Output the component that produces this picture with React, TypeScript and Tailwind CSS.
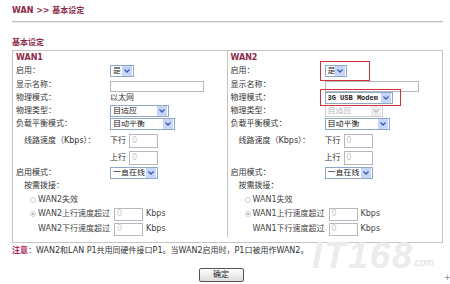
import React from "react";

const font = "font-['DejaVu_Sans','Noto_Sans_CJK_SC',sans-serif]";

const Arrow = ({ disabled }: { disabled?: boolean }) => (
  <span
    className={`flex h-[10px] w-[10px] items-center justify-center mr-[1px] ${
      disabled ? "bg-[#eeeeee]" : "bg-[#c6d6fb]"
    }`}
  >
    <svg width="6" height="4" viewBox="0 0 6 4">
      <path
        d="M0.5 0.5 L3 3 L5.5 0.5"
        fill="none"
        stroke={disabled ? "#bbbbbb" : "#3d5ba8"}
        strokeWidth="1.3"
      />
    </svg>
  </span>
);

const Select = ({
  text,
  w,
  disabled,
  mono,
}: {
  text: string;
  w: string;
  disabled?: boolean;
  mono?: boolean;
}) => (
  <div
    className={`flex h-[12px] items-center border bg-white ${w} ${
      disabled ? "border-[#d0d0d0] text-[#b5b5b5]" : "border-[#8fa6c6] text-[#222]"
    }`}
  >
    <span
      className={`flex-1 overflow-hidden pl-[2px] leading-none whitespace-nowrap ${
        mono ? "font-['Liberation_Mono',monospace] text-[7px] font-bold" : ""
      }`}
    >
      {text}
    </span>
    <Arrow disabled={disabled} />
  </div>
);

const Input = ({ w, h = "h-[11px]", value }: { w: string; h?: string; value?: string }) => (
  <div className={`flex items-center border border-[#b4b9c0] bg-white pl-[2px] text-[#c8c8c8] ${w} ${h}`}>
    {value}
  </div>
);

const Radio = ({ checked }: { checked?: boolean }) => (
  <span className="flex h-[6px] w-[6px] items-center justify-center rounded-full border border-[#d0d0d0] bg-white">
    {checked && <span className="h-[2px] w-[2px] rounded-full bg-[#999]" />}
  </span>
);

const Row = ({
  h,
  label,
  indent = "pl-[3px]",
  children,
  className = "",
}: {
  h: string;
  label?: string;
  indent?: string;
  children?: React.ReactNode;
  className?: string;
}) => (
  <div className={`flex items-center ${h} ${className}`}>
    <div className={`w-[97px] ${indent} whitespace-nowrap`}>{label}</div>
    <div className="flex items-center">{children}</div>
  </div>
);

const Wan = ({
  name,
  other,
  mode,
  right,
}: {
  name: string;
  other: string;
  mode: React.ReactNode;
  right?: boolean;
}) => (
  <div className="flex flex-col pt-[1px]">
    <div className="flex h-[12px] items-center pl-[3px] font-bold text-[#8e2a4b]">{name}</div>
    <Row h="h-[14px]" label="启用：">
      {right ? (
        <div className="relative">
          <Select text="是" w="w-[22px]" />
          <div className="absolute -left-[5px] -top-[4px] h-[20px] w-[50px] border-[1.5px] border-[#d0303a]" />
        </div>
      ) : (
        <Select text="是" w="w-[24px]" />
      )}
    </Row>
    <Row h="h-[14px]" label="显示名称：">
      <div className="pt-[2px]">
        <Input w="w-[94px]" h="h-[11px]" />
      </div>
    </Row>
    <Row h="h-[12px]" label="物理模式：">
      {mode}
    </Row>
    <Row h="h-[13px]" label="物理类型：">
      <Select text="自适应" w={right ? "w-[58px]" : "w-[59px]"} disabled={right} />
    </Row>
    <Row h="h-[13px]" label="负载平衡模式：">
      <Select text="自动平衡" w="w-[65px]" />
    </Row>
    <Row h="h-[16px]" label="线路速度（Kbps）：" indent="pl-[11px]" className="mt-[3px]">
      <span className="w-[19px]">下行</span>
      <Input w="w-[29px]" h="h-[14px]" value="0" />
    </Row>
    <Row h="h-[16px]" className="mt-[1px]">
      <span className="w-[19px]">上行</span>
      <Input w="w-[29px]" h="h-[14px]" value="0" />
    </Row>
    <Row h="h-[13px]" label="启用模式：">
      <Select text="一直在线" w="w-[48px]" />
    </Row>
    <div className="flex h-[14px] items-center pl-[11px]">按需拨接：</div>
    <div className="flex h-[14px] items-center gap-[2px] pl-[17px]">
      <Radio />
      <span className="text-[#444]">{other}失效</span>
    </div>
    <div className="flex h-[14px] items-center gap-[2px] pl-[17px]">
      <Radio checked />
      <span className="w-[74px] text-[#444]">{other}上行速度超过</span>
      <Input w="w-[29px]" h="h-[13px]" value="0" />
      <span className="pl-[1px] text-[#444]">Kbps</span>
    </div>
    <div className="flex h-[16px] items-center gap-[2px] pl-[17px]">
      <span className="w-[6px]" />
      <span className="w-[74px] text-[#444]">{other}下行速度超过</span>
      <Input w="w-[29px]" h="h-[13px]" value="0" />
      <span className="pl-[1px] text-[#444]">Kbps</span>
    </div>
  </div>
);

export default function App() {
  return (
    <div className={`relative h-[284px] w-[450px] overflow-hidden bg-white text-[8px] text-[#333] ${font}`}>
      <div className="px-[12px] pt-[5px]">
        <div className="h-[12px] font-bold leading-[12px] text-[#8e2a4b]">WAN &gt;&gt; 基本设定</div>
        <div className="mt-[4px] h-[2px] w-[431px] border-t border-[#bdbdbd] border-b border-b-[#eeeeee]" />
        <div className="mt-[14px] h-[12px] font-bold leading-[12px] text-[#8e2a4b]">基本设定</div>
        <div className="mt-[1px] grid w-[431px] grid-cols-2 border border-[#c4c4c4] pb-[5px]">
          <div className="border-r border-[#c4c4c4]">
            <Wan name="WAN1" other="WAN2" mode={<span>以太网</span>} />
          </div>
          <div>
            <Wan
              name="WAN2"
              other="WAN1"
              right
              mode={
                <div className="relative">
                  <Select text="3G USB Modem" w="w-[68px]" mono />
                  <div className="absolute -left-[5px] -top-[3px] h-[17px] w-[81px] border-[1.5px] border-[#d0303a]" />
                </div>
              }
            />
          </div>
        </div>
        <div className="mt-[2px] h-[12px] leading-[12px]">
          <span className="font-bold text-[#b0245a]">注意</span>：WAN2和LAN P1共用同硬件接口P1。当WAN2启用时，P1口被用作WAN2。
        </div>
        <div className="mt-[11px] flex justify-center pr-[8px]">
          <button className="h-[14px] w-[45px] rounded-[2px] border border-[#555] bg-gradient-to-b from-white to-[#dcdcdc] text-[8px] leading-none text-[#222]">
            确定
          </button>
        </div>
      </div>
      <div className="pointer-events-none absolute left-[312px] top-[238px] font-['Liberation_Sans',sans-serif] text-[36px] font-bold italic leading-none tracking-[2px] text-[#ececec]">
        IT168
      </div>
      <div className="pointer-events-none absolute left-[412px] top-[258px] font-['Liberation_Sans',sans-serif] text-[10px] italic leading-none text-[#dddddd]">
        .com
      </div>
      <div className="absolute left-[444px] top-[272px] text-[8px] text-[#888]">+</div>
    </div>
  );
}
